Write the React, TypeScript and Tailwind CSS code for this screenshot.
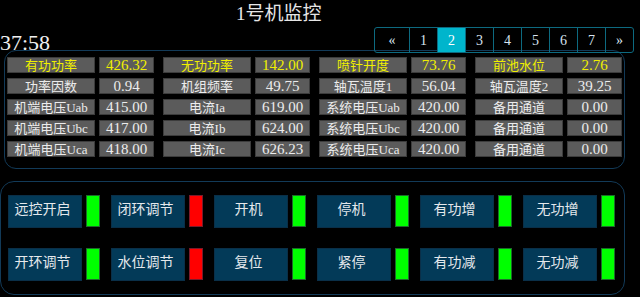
import React from 'react';

// 1号机监控 — unit monitoring panel: measurements grid + control buttons

const cjk = '"Liberation Serif", "Noto Sans CJK SC", serif';

type Cell = { label: string; value: string };

const rows: Cell[][] = [
  [
    { label: '有功功率', value: '426.32' },
    { label: '无功功率', value: '142.00' },
    { label: '喷针开度', value: '73.76' },
    { label: '前池水位', value: '2.76' },
  ],
  [
    { label: '功率因数', value: '0.94' },
    { label: '机组频率', value: '49.75' },
    { label: '轴瓦温度1', value: '56.04' },
    { label: '轴瓦温度2', value: '39.25' },
  ],
  [
    { label: '机端电压Uab', value: '415.00' },
    { label: '电流Ia', value: '619.00' },
    { label: '系统电压Uab', value: '420.00' },
    { label: '备用通道', value: '0.00' },
  ],
  [
    { label: '机端电压Ubc', value: '417.00' },
    { label: '电流Ib', value: '624.00' },
    { label: '系统电压Ubc', value: '420.00' },
    { label: '备用通道', value: '0.00' },
  ],
  [
    { label: '机端电压Uca', value: '418.00' },
    { label: '电流Ic', value: '626.23' },
    { label: '系统电压Uca', value: '420.00' },
    { label: '备用通道', value: '0.00' },
  ],
];

const controls: { label: string; on: boolean }[][] = [
  [
    { label: '远控开启', on: true },
    { label: '闭环调节', on: false },
    { label: '开机', on: true },
    { label: '停机', on: true },
    { label: '有功增', on: true },
    { label: '无功增', on: true },
  ],
  [
    { label: '开环调节', on: true },
    { label: '水位调节', on: false },
    { label: '复位', on: true },
    { label: '紧停', on: true },
    { label: '有功减', on: true },
    { label: '无功减', on: true },
  ],
];

const pages = ['«', '1', '2', '3', '4', '5', '6', '7', '»'];

export default function App() {
  return (
    <div className="w-[640px] h-[297px] bg-black overflow-hidden text-white" style={{ fontFamily: cjk }}>
      {/* header */}
      <div className="h-[50px] relative">
        <div className="pl-[236px] pt-[4px] text-[19px] leading-[20px] text-[#e6e6e6]">1号机监控</div>
        <div className="flex items-start justify-between pr-[6px] mt-[3px]">
          <div className="mt-[6px] text-[22px] leading-[19px] text-[#f0f0f0]">37:58</div>
          <div className="flex h-[26px] border border-[#0d6a80] rounded-[3px] relative z-10">
            {pages.map((p, i) => (
              <div
                key={i}
                className={`flex items-center justify-center text-[14px] ${
                  i === 0 ? 'w-[34px]' : 'w-[28px]'
                } ${i > 0 ? 'border-l border-[#0d6a80]' : ''} ${
                  p === '2' ? 'bg-[#00b5cc] text-white' : 'text-[#d8e4f0]'
                }`}
              >
                {p}
              </div>
            ))}
          </div>
        </div>
      </div>

      {/* measurement panel */}
      <div className="ml-[4px] w-[621px] h-[119px] border border-[#123a58] rounded-[12px] pt-[6px] pl-[2px] flex flex-col gap-[5px]">
        {rows.map((row, r) => (
          <div key={r} className="flex gap-[9px]">
            {row.map((c, i) => (
              <div key={i} className="flex gap-[4px]">
                <div
                  className={`w-[88px] h-[16px] bg-[#5b5b5b] border border-[#3c3c3c] flex items-center justify-center text-[13px] leading-none whitespace-nowrap ${
                    r === 0 ? 'text-[#f0f000]' : 'text-[#ececec]'
                  }`}
                >
                  {c.label}
                </div>
                <div
                  className={`w-[55px] h-[16px] bg-[#5b5b5b] border border-[#3c3c3c] flex items-center justify-center text-[15px] leading-none ${
                    r === 0 ? 'text-[#f0f000]' : 'text-[#ececec]'
                  }`}
                >
                  {c.value}
                </div>
              </div>
            ))}
          </div>
        ))}
      </div>

      {/* control panel */}
      <div className="mt-[12px] w-[625px] h-[114px] border border-[#123a58] rounded-[14px] pt-[13px] pl-[7px] flex flex-col gap-[20px]">
        {controls.map((row, r) => (
          <div key={r} className="flex gap-[11px]">
            {row.map((c, i) => (
              <div key={i} className="flex gap-[4px]">
                <div className="w-[74px] h-[33px] bg-[#033a58] border border-[#0a2f48] flex justify-center pt-[3px] pr-[5px] text-[14px] leading-[18px] text-[#e4e8ec] whitespace-nowrap" style={{ fontFamily: '"Noto Sans CJK SC", sans-serif' }}>
                  {c.label}
                </div>
                <div
                  className={`w-[14px] h-[32px] border ${
                    c.on ? 'bg-[#00ff00] border-[#1d6b2a]' : 'bg-[#ff0000] border-[#7a1a2a]'
                  }`}
                />
              </div>
            ))}
          </div>
        ))}
      </div>
    </div>
  );
}
